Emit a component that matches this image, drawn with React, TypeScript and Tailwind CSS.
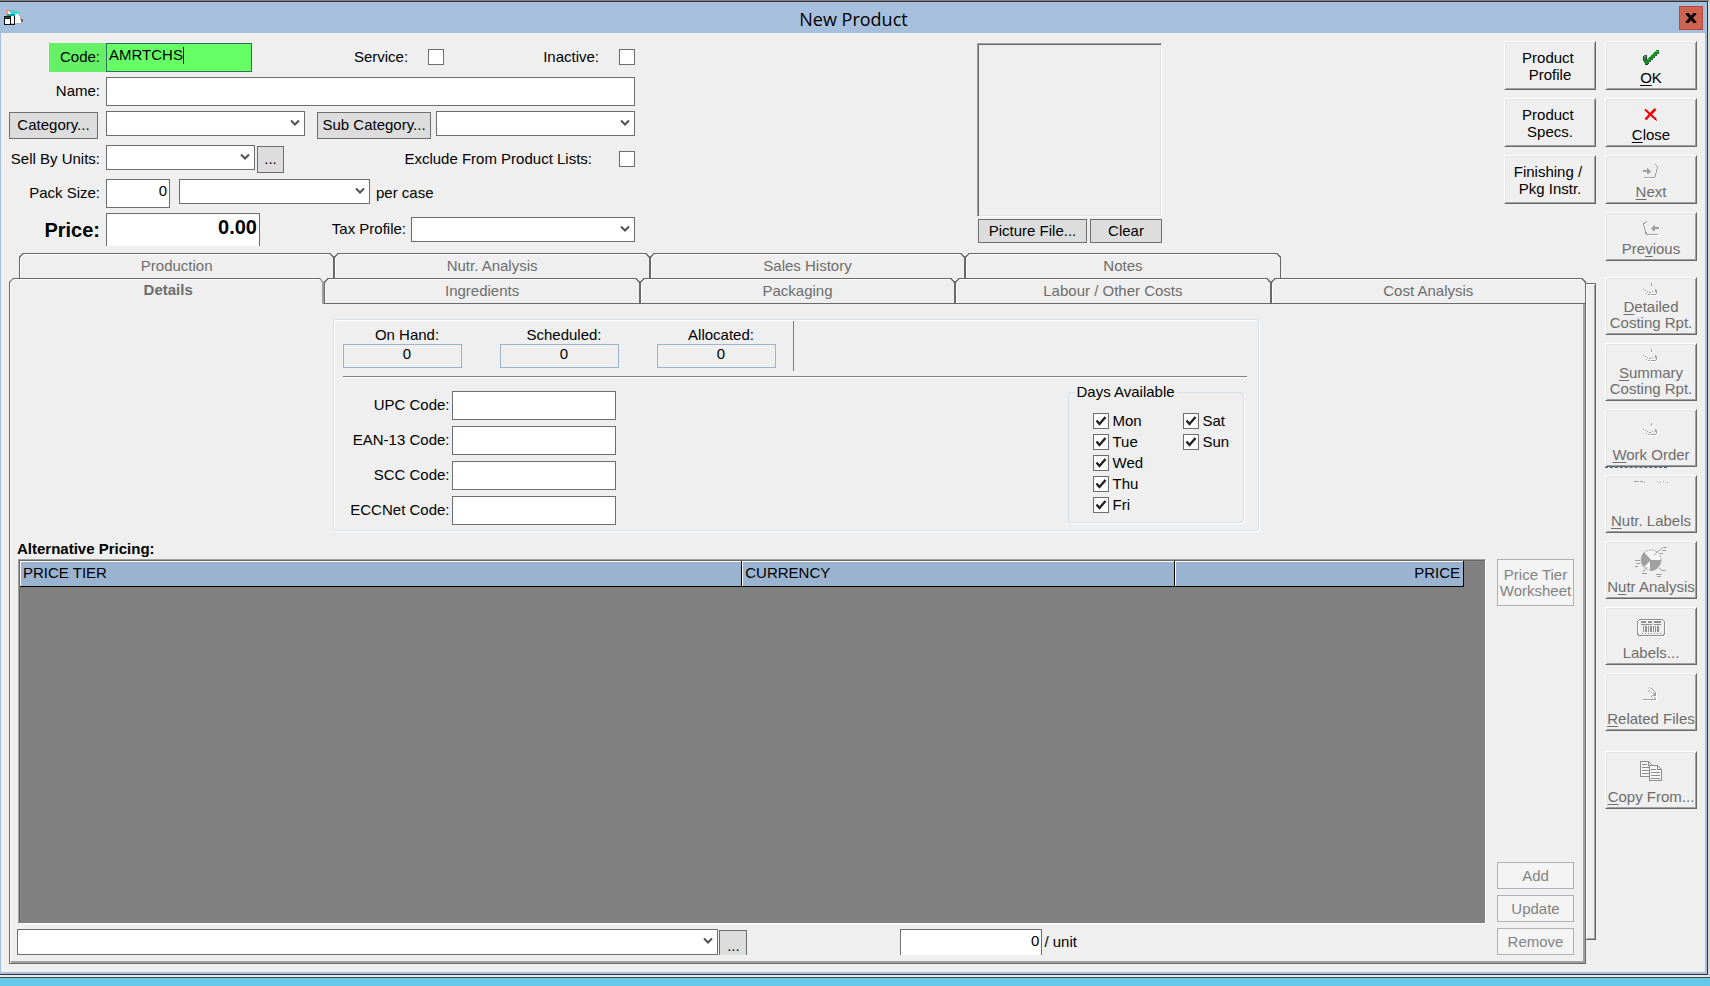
import { FC, ReactNode, useState } from 'react';
import clsx from 'clsx';

const bevel =
    'border border-t-white border-l-white border-r-[#696969] border-b-[#696969] shadow-[inset_1px_1px_0_#e3e3e3,inset_-1px_-1px_0_#a0a0a0]';
const field = 'border border-[#6d6d6d] bg-white px-1 pb-[6px] outline-none';

const AppIcon: FC = () => (
    <svg width="20" height="16" viewBox="0 0 20 16" shapeRendering="crispEdges">
        <path d="M4 1h10l3 9v3H9L4 5z" fill="#fff" />
        <path d="M2.500 5V.500h7" stroke="#e88a8a" fill="none" />
        <path d="M4 1h10l2 3H7z" fill="#2ee0dc" />
        <path d="M15.500 4l1.500 6v3.500h-5" stroke="#b0b0b0" fill="none" />
        <path d="M17 9h2v3h-2z" fill="#6b6b6b" />
        <path d="M3 4h8v9H3z" fill="#fff" />
        <path d="M3 4h8v2H3z" fill="#0fa09e" />
        <path d="M10 6h1v8h-1zM7 14h4v1H7z" fill="#111" />
        <path d="M0 6h7v9H0z" fill="#111" />
        <path d="M1 9h5v5H1z" fill="#fff" />
        <path d="M1 7h5v1H1z" fill="#0a6a6a" />
    </svg>
);

const OkIcon: FC = () => (
    <svg width="16" height="15" viewBox="0 0 16 15" shapeRendering="crispEdges">
        <path d="M0 6h1V5h3v4h1V8h1V7h1V6h1V5h1V4h1V3h1V2h1V1h1V0h3v3h-1v1h-1v1h-1v1h-1v1h-1v1h-1v1H9v1H8v1H7v1H6v1H5v1H2v-1H1v-3H0z" fill="#168a24" />
        <path d="M12 1h3M10 3h1M9 4h1M7 6h1M5 9h1M1 6h2" stroke="#2fd63a" />
        <path d="M3 5h1v5H3zM0 6h1v5H0z" fill="#6b1a78" />
        <path d="M15 3h1v1h-1zM13 5h1v1h-1zM11 7h1v1h-1zM9 9h1v1H9zM7 11h1v1H7zM5 13h1v1H5zM2 14h3v1H2z" fill="#4a2a55" />
    </svg>
);

const CloseIcon: FC = () => (
    <svg width="14" height="13" viewBox="0 0 14 13">
        <path d="M1 1.500L12 11.500" stroke="#f00000" strokeWidth="2" />
        <path d="M11.500 1L5 7.500l-3.500 4" stroke="#f00000" strokeWidth="2.500" fill="none" />
        <path d="M11 11l2 1.500" stroke="#700" strokeWidth="1" />
    </svg>
);

const NextIcon: FC = () => (
    <svg width="16" height="15" viewBox="0 0 16 15" shapeRendering="crispEdges">
        <path d="M1 14h13v1H1z" fill="#fff" />
        <path d="M0 6h4V4h1v1h1v1h1v1h1v1H7v1H6v1H4V8H0z" fill="#a0a0a0" />
        <path d="M12 0h1v1h1v1h1v3h-1v4h-1v4h-1v1H1v-1h11v-4h1V5h1V2h-1V1h-1z" fill="#a0a0a0" />
    </svg>
);

const PreviousIcon: FC = () => (
    <svg width="16" height="15" viewBox="0 0 16 15" shapeRendering="crispEdges">
        <path d="M4 0H3v1H1v1H0v3h1v4h1v4h1v1h12v-1H4v-2H3V9H2V5H1V3h1V2h1V1h1z" fill="#a0a0a0" />
        <path d="M16 6h-4V4h-1v1h-1v1H9v1H8v1h1v1h1v1h2V8h4z" fill="#a0a0a0" />
        <path d="M4 14h12v1H4z" fill="#fff" />
    </svg>
);

const ReportIcon: FC = () => (
    <svg width="16" height="13" viewBox="0 0 16 13" shapeRendering="crispEdges">
        <path d="M9 1h1v3H9zM5 12h9v1H5zM14 8h1v4h-1z" fill="#fff" />
        <path
            d="M8 0h1v3H8zM0 6h1v1H0zM2 7h1v1H2zM4 8h1v1H4zM6 9h2v1H6zM9 8h1v1H9zM12 6h1v1h1v2h-2zM13 9h1v2h-1zM3 10h1v1H3zM5 11h2v1H5zM8 11h5v1H8z"
            fill="#a0a0a0"
        />
    </svg>
);

const DashIcon: FC = () => (
    <svg width="36" height="30" viewBox="0 0 36 30" shapeRendering="crispEdges">
        <path d="M1 0h5v1H1zM7 0h3v1H7zM11 1h1v1h-1zM24 0h1v1h-1zM30 0h1v1h-1zM34 1h1v1h-1zM27 1h1v1h-1z" fill="#a0a0a0" />
    </svg>
);

const AnalysisIcon: FC = () => (
    <svg width="32" height="30" viewBox="0 0 32 30">
        <circle cx="16" cy="13" r="10" fill="#f7f7f7" stroke="#a0a0a0" strokeDasharray="2 1" />
        <path d="M16 13L9 5a11 11 0 0 0 0 15z" fill="#a0a0a0" />
        <path d="M15 13h11a11 11 0 0 1-11 11z" fill="#a0a0a0" />
        <path
            d="M19 8l8-7M28 .5h4M27 3.500h4M25 6.500h3M0 13.500h5M1 16.500h4M0 19.500h3M12 20l-4 5M7 26.500h5M24 21l4 3M27 23.500h4M21 27.500h6M22 29.500h4"
            stroke="#a0a0a0"
            fill="none"
        />
    </svg>
);

const BarcodeIcon: FC = () => (
    <svg width="29" height="18" viewBox="0 0 29 18" shapeRendering="crispEdges">
        <rect x="1.500" y="1.500" width="27" height="16" rx="3" fill="none" stroke="#fff" />
        <rect x="0.500" y="0.500" width="27" height="16" rx="3" fill="none" stroke="#909090" />
        <path d="M4 2h5v2H4zM11 2h4v2h-4zM17 2h7v2h-7zM4 5h11v1H4zM17 5h7v1h-7z" fill="#909090" />
        <path d="M6 7h1v6H6zM8 7h2v6H8zM11 7h1v6h-1zM13 7h2v6h-2zM16 7h1v6h-1zM18 7h1v6h-1zM20 7h2v6h-2z" fill="#909090" />
        <path d="M5 14.500h19" stroke="#909090" strokeDasharray="1 2" />
    </svg>
);

const FilesIcon: FC = () => (
    <svg width="16" height="14" viewBox="0 0 16 14" shapeRendering="crispEdges">
        <path d="M13 6h1v7h-1zM2 13h12v1H2z" fill="#fff" />
        <path
            d="M6 0h1v1H6zM8 1h1v1H8zM9 2h1v1H9zM10 3h1v1h-1zM6 3h1v1H6zM5 4h1v1H5zM11 4h1v1h-1zM8 5h1v1H8zM10 6h3v1h-3zM12 5h1v4h-1zM11 7h1v2h-1zM9 8h2v1H9zM8 9h1v1H8zM11 10h1v1h-1zM12 11h1v2h-1zM0 12h12v1H0z"
            fill="#a0a0a0"
        />
    </svg>
);

const CopyIcon: FC = () => (
    <svg width="23" height="21" viewBox="0 0 23 21" shapeRendering="crispEdges">
        <path d="M.5.500h8l4 4v11H.500z" fill="#f7f7f7" stroke="#8c8c8c" />
        <path d="M8.500 1v3.500h4M2 3.500h5M2 6.500h7M2 9.500h7M2 12.500h7" stroke="#8c8c8c" fill="none" />
        <path d="M9.500 4.500h8l4 4v11h-12z" fill="#f7f7f7" stroke="#8c8c8c" />
        <path d="M17.500 5v3.500h4M11 8.500h5M11 11.500h9M11 14.500h9M11 17.500h9" stroke="#8c8c8c" fill="none" />
    </svg>
);

interface ComboProps {
    label: string;
    className: string;
    id?: string;
}

const Combo: FC<ComboProps> = ({ label, className, id }) => (
    <div className={clsx('relative', className)}>
        <select id={id} aria-label={label} className="block h-full w-full appearance-none border border-[#6d6d6d] bg-white px-1 outline-none">
            <option value=""></option>
        </select>
        <svg className="pointer-events-none absolute top-2 right-[5px]" width="10" height="8" viewBox="0 0 10 8">
            <path d="M1 1.500l4 4 4-4" stroke="#505050" strokeWidth="2" fill="none" />
        </svg>
    </div>
);

const CheckBox: FC<{ id: string; initial?: boolean }> = ({ id, initial = false }) => {
    const [checked, setChecked] = useState(initial);
    return (
        <span className="relative block size-4 shrink-0">
            <input
                id={id}
                type="checkbox"
                checked={checked}
                onChange={() => setChecked(!checked)}
                className="block size-4 appearance-none border border-[#6d6d6d] bg-white"
            />
            {checked && (
                <svg className="pointer-events-none absolute inset-0" width="16" height="16" viewBox="0 0 16 16">
                    <path d="M3.500 7.500l3 3.500 6-7" stroke="#222" strokeWidth="2.400" fill="none" />
                </svg>
            )}
        </span>
    );
};

const GreyButton: FC<{ className: string; children: ReactNode }> = ({ className, children }) => (
    <button type="button" className={clsx('shrink-0 border border-[#6d6d6d] bg-[#dddddd]', className)}>
        {children}
    </button>
);

const FlatButton: FC<{ className: string; children: ReactNode }> = ({ className, children }) => (
    <button type="button" disabled className={clsx('w-full border border-[#adb2b5] bg-[#f4f4f4] leading-4 text-[#838383]', className)}>
        {children}
    </button>
);

const FormRow: FC<{ id: string; label: string; children: ReactNode }> = ({ id, label, children }) => (
    <div className="flex h-[34px] items-start">
        <label htmlFor={id} className="w-[97px] shrink-0 pr-[6px] text-right leading-[27px] whitespace-nowrap">
            {label}
        </label>
        {children}
    </div>
);

interface SideButtonProps {
    icon: ReactNode;
    // text is split around the underlined access key
    pre?: string;
    hot?: string;
    post?: string;
    second?: string;
    tall?: boolean;
    enabled?: boolean;
}

const SideButton: FC<SideButtonProps> = ({ icon, pre, hot, post, second, tall, enabled }) => (
    <button
        type="button"
        disabled={!enabled}
        className={clsx(
            bevel,
            'flex w-[92px] shrink-0 flex-col items-center pt-[2px] pb-[3px] leading-4 whitespace-nowrap',
            tall ? 'h-[58px]' : 'h-[49px]',
            enabled ? 'text-black' : 'text-[#6d6d6d]'
        )}
    >
        <span className="flex min-h-0 flex-1 items-center">{icon}</span>
        <span>
            {pre}
            {hot && <span className="underline underline-offset-2">{hot}</span>}
            {post}
        </span>
        {second && <span>{second}</span>}
    </button>
);

const backTabs = ['Production', 'Nutr. Analysis', 'Sales History', 'Notes'];
const frontTabs = ['Details', 'Ingredients', 'Packaging', 'Labour / Other Costs', 'Cost Analysis'];
const stock = ['On Hand:', 'Scheduled:', 'Allocated:'];
const codes = ['UPC Code:', 'EAN-13 Code:', 'SCC Code:', 'ECCNet Code:'];
const weekDays = ['Mon', 'Tue', 'Wed', 'Thu', 'Fri'];
const weekend = ['Sat', 'Sun'];
const profileButtons = ['Product \nProfile', 'Product \nSpecs.', 'Finishing / \nPkg Instr.'];

const tabShape =
    'rounded-t-[4px] [corner-shape:bevel] border-t border-l border-[#696969] shadow-[inset_1px_1px_0_#fff]';

const DayList: FC<{ days: string[] }> = ({ days }) => (
    <div className="flex flex-col gap-[5px]">
        {days.map((day) => (
            <div key={day} className="flex h-4 items-center gap-1">
                <CheckBox id={day} initial />
                <label htmlFor={day}>{day}</label>
            </div>
        ))}
    </div>
);

const ProductForm: FC = () => (
    <div className="w-[626px] shrink-0">
        <div className="flex h-[34px] items-start">
            <label htmlFor="code" className="ml-10 h-[29px] w-[57px] shrink-0 bg-[#66f066] pr-[6px] text-right leading-[27px]">
                Code:
            </label>
            <div className="relative h-[29px] w-[146px]">
                <input
                    id="code"
                    defaultValue="AMRTCHS"
                    className="block h-full w-full border border-[#2f6f5f] bg-[#66ff66] px-[2px] pb-[6px] caret-transparent outline-none"
                />
                {/* text caret */}
                <span className="pointer-events-none absolute top-1 left-[77px] h-[17px] w-px bg-black" />
            </div>
            <div className="ml-auto flex h-7 items-center gap-5">
                <label htmlFor="service">Service:</label>
                <CheckBox id="service" />
            </div>
            <div className="ml-[99px] flex h-7 items-center gap-5">
                <label htmlFor="inactive">Inactive:</label>
                <CheckBox id="inactive" />
            </div>
        </div>
        <FormRow id="name" label="Name:">
            <input id="name" className={clsx(field, 'h-[29px] w-full')} />
        </FormRow>
        <div className="flex h-[34px] items-start">
            <GreyButton className="mt-px mr-2 h-[27px] w-[89px]">Category...</GreyButton>
            <Combo label="Category" className="h-[25px] w-[199px]" />
            <GreyButton className="mt-px mr-[5px] ml-auto h-[27px] w-[114px]">Sub Category...</GreyButton>
            <Combo label="Sub category" className="h-[25px] w-[199px]" />
        </div>
        <FormRow id="units" label="Sell By Units:">
            <Combo id="units" label="Sell by units" className="h-[25px] w-[149px]" />
            <GreyButton className="mt-px ml-[2px] h-[27px] w-[27px]">...</GreyButton>
            <div className="ml-auto flex h-7 items-center gap-[27px]">
                <label htmlFor="exclude">Exclude From Product Lists:</label>
                <CheckBox id="exclude" />
            </div>
        </FormRow>
        <FormRow id="pack" label="Pack Size:">
            <input id="pack" defaultValue="0" className={clsx(field, 'h-[29px] w-16 px-[2px] text-right')} />
            <Combo label="Pack unit" className="ml-[9px] h-[25px] w-[191px]" />
            <span className="ml-[6px] leading-[27px]">per case</span>
        </FormRow>
        <div className="flex h-[33px] items-center">
            <label htmlFor="price" className="w-[97px] shrink-0 pr-[6px] text-right text-xl font-bold">
                Price:
            </label>
            <input
                id="price"
                defaultValue="0.00"
                className="h-full w-[154px] border border-b-0 border-[#6d6d6d] bg-white px-[2px] pb-[6px] text-right text-xl font-bold outline-none"
            />
            <label htmlFor="tax" className="mr-[5px] ml-auto">
                Tax Profile:
            </label>
            <Combo id="tax" label="Tax profile" className="h-[25px] w-[224px]" />
        </div>
    </div>
);

const StockGroup: FC = () => (
    <section className="mx-auto h-[212px] w-[926px] max-w-full shrink-0 rounded-[3px] border border-[#d5dfe5] pr-[11px] pl-[9px] shadow-[inset_1px_1px_0_#fff,1px_1px_0_#fff]">
        <div className="flex h-[57px] border-b border-[#808080] shadow-[0_1px_0_#fff]">
            <div className="flex gap-[38px] pt-[6px]">
                {stock.map((label) => (
                    <div key={label} className="w-[119px] text-center leading-[18px]">
                        <div className="pl-[10px]">{label}</div>
                        <div className="h-6 border border-[#9ab3d1] pl-[10px]">
                            0
                        </div>
                    </div>
                ))}
            </div>
            <div className="mt-px ml-[17px] h-[50px] w-px bg-[#808080]" />
        </div>
        <div className="flex justify-between">
            <div className="flex flex-col gap-[6px] pt-[14px]">
                {codes.map((code) => (
                    <div key={code} className="flex items-center">
                        <label htmlFor={code} className="w-[109px] pr-[2px] text-right">
                            {code}
                        </label>
                        <input id={code} className={clsx(field, 'h-[29px] w-[164px]')} />
                    </div>
                ))}
            </div>
            <fieldset className="mt-[6px] mr-[3px] h-[140px] w-[176px] rounded-[3px] border border-[#d5dfe5] shadow-[1px_1px_0_#fff]">
                <legend className="ml-[6px] px-[2px] leading-[18px]">Days Available</legend>
                <div className="grid grid-cols-[90px_auto] items-start pt-3 pl-6">
                    <DayList days={weekDays} />
                    <DayList days={weekend} />
                </div>
            </fieldset>
        </div>
    </section>
);

const Pricing: FC = () => (
    <section className="flex min-h-0 flex-1 flex-col pt-[9px]">
        <h2 className="pb-px font-bold leading-[18px]">Alternative Pricing:</h2>
        <div className="flex flex-1 gap-[11px]">
            <div className="flex flex-1 flex-col gap-[5px]">
                <div className="ml-px flex-1 border border-t-[#a0a0a0] border-r-white border-b-white border-l-[#a0a0a0] bg-[#808080] pr-[22px] shadow-[inset_1px_1px_0_#696969]">
                    <table className="mt-px ml-px w-full table-fixed border-collapse text-left">
                        <thead>
                            <tr className="h-[25px] border-b border-black bg-[#9ab3d1]">
                                <th className="w-1/2 border-r border-black px-[3px] font-normal shadow-[inset_1px_1px_0_#fff]">PRICE TIER</th>
                                <th className="w-[30%] border-r border-black px-[3px] font-normal shadow-[inset_1px_1px_0_#fff]">CURRENCY</th>
                                <th className="w-1/5 border-r border-black px-[3px] text-right font-normal shadow-[inset_1px_1px_0_#fff]">PRICE</th>
                            </tr>
                        </thead>
                    </table>
                </div>
                <div className="flex h-[26px]">
                    <div className="mr-[2px] flex w-[60%]">
                        <Combo label="Price tier" className="mr-px h-full flex-1" />
                        <GreyButton className="mt-px mr-[151px] w-7 border-b-0 pt-1">...</GreyButton>
                    </div>
                    <input
                        id="unit-price"
                        defaultValue="0"
                        className="h-full w-[142px] border border-b-0 border-[#6d6d6d] bg-white px-[2px] pb-1 text-right outline-none"
                    />
                    <label htmlFor="unit-price" className="ml-[2px] leading-[26px]">
                        / unit
                    </label>
                </div>
            </div>
            <div className="flex w-[77px] flex-col gap-[6px]">
                <FlatButton className="mb-auto h-[47px]">Price Tier Worksheet</FlatButton>
                <FlatButton className="h-[27px]">Add</FlatButton>
                <FlatButton className="h-[27px]">Update</FlatButton>
                <FlatButton className="h-[27px]">Remove</FlatButton>
            </div>
        </div>
    </section>
);

export default function App() {
    return (
        <div className="flex min-h-screen flex-col bg-[#65c9e9] font-['Liberation_Sans',Arial,sans-serif] text-[15px] text-black">
            <div className="flex flex-1 flex-col border-t border-r-2 border-t-[#808080] border-r-[#d8d8d8] bg-[#e8e8e8] pb-[2px]">
                <div className="flex flex-1 flex-col border-t border-r border-b border-[#33333d] bg-[#a6bfdc]">
                    <header className="grid h-[31px] grid-cols-[1fr_auto_1fr] items-center pr-1 pl-1">
                        <AppIcon />
                        <h1 className="pt-[2px] font-['Open_Sans',sans-serif] text-lg leading-6">New Product</h1>
                        <button
                            type="button"
                            aria-label="Close window"
                            className="flex size-6 items-center justify-center justify-self-end border border-[#b5483a] bg-[#cd6350]"
                        >
                            <svg width="12" height="10" viewBox="0 0 12 10">
                                <path d="M1.500 0l9 10M10.500 0l-9 10" stroke="#000" strokeWidth="3" />
                            </svg>
                        </button>
                    </header>

                    <main className="mr-[2px] mb-[2px] ml-px flex flex-1 gap-[9px] bg-[#efefef] pt-2 pr-2 pl-2">
                        <div className="flex min-w-0 flex-1 flex-col pb-2">
                            <div className="flex justify-between">
                                <div className="pt-[2px]">
                                    <ProductForm />
                                </div>
                                <div className="w-[185px] pt-[2px]">
                                    <div className="h-[174px] border border-t-[#a0a0a0] border-r-white border-b-white border-l-[#a0a0a0] shadow-[inset_1px_1px_0_#696969,inset_-1px_-1px_0_#e3e3e3]" />
                                    <div className="flex justify-between pt-[2px] pl-px">
                                        <GreyButton className="h-6 w-[109px]">Picture File...</GreyButton>
                                        <GreyButton className="h-6 w-[72px]">Clear</GreyButton>
                                    </div>
                                </div>
                                <div className="flex flex-col gap-2">
                                    {profileButtons.map((text) => (
                                        <button key={text} type="button" className={clsx(bevel, 'h-[49px] w-[92px] leading-[17px] whitespace-pre')}>
                                            {text}
                                        </button>
                                    ))}
                                </div>
                            </div>

                            {/* Back row of tabs */}
                            <div className="mt-[7px] ml-[10px] grid grid-cols-5" role="tablist">
                                {backTabs.map((tab) => (
                                    <button
                                        key={tab}
                                        type="button"
                                        role="tab"
                                        className={clsx(tabShape, 'h-[25px] border-r pt-px text-[#6d6d6d]')}
                                    >
                                        {tab}
                                    </button>
                                ))}
                            </div>

                            <div className="flex flex-1">
                                <div className="flex min-w-0 flex-1 flex-col">
                                    <div className="grid grid-cols-5" role="tablist">
                                        {frontTabs.map((tab, i) => (
                                            <button
                                                key={tab}
                                                type="button"
                                                role="tab"
                                                aria-selected={i === 0}
                                                className={clsx(
                                                    tabShape,
                                                    'h-[26px] text-[#6d6d6d]',
                                                    i === 0 ? 'border-r-2 border-r-[#a0a0a0] pb-[2px] pl-1 font-bold' : 'border-r border-b pt-px'
                                                )}
                                            >
                                                {tab}
                                            </button>
                                        ))}
                                    </div>
                                    <div className="flex flex-1 flex-col border-r border-b border-l border-[#696969] pt-[15px] pr-[11px] pb-2 pl-[7px] shadow-[inset_1px_0_0_#fff,inset_-2px_-2px_0_#a0a0a0]">
                                        <StockGroup />
                                        <Pricing />
                                    </div>
                                </div>
                                {/* Edge of the page behind */}
                                <div className="mt-[5px] mb-6 w-[10px] border-t border-r border-b border-[#696969] shadow-[inset_1px_1px_0_#fff,inset_-1px_-1px_0_#a0a0a0]" />
                            </div>
                        </div>

                        <aside className="flex flex-col gap-2">
                            <SideButton enabled icon={<OkIcon />} hot="O" post="K" />
                            <SideButton enabled icon={<CloseIcon />} hot="C" post="lose" />
                            <SideButton icon={<NextIcon />} hot="N" post="ext" />
                            <SideButton icon={<PreviousIcon />} pre="Pre" hot="v" post="ious" />
                            <div className="flex flex-col gap-2 pt-2">
                                <SideButton tall icon={<ReportIcon />} hot="D" post="etailed" second="Costing Rpt." />
                                <SideButton tall icon={<ReportIcon />} hot="S" post="ummary" second="Costing Rpt." />
                                <div className="relative">
                                    <SideButton tall icon={<ReportIcon />} hot="W" post="ork Order" />
                                    <span className="absolute top-full left-0 w-[62px] border-t border-dashed border-[#2f6f96]" />
                                </div>
                                <SideButton tall icon={<DashIcon />} hot="N" post="utr. Labels" />
                                <SideButton tall icon={<AnalysisIcon />} pre="N" hot="u" post="tr Analysis" />
                                <SideButton tall icon={<BarcodeIcon />} pre="Labels..." />
                                <SideButton tall icon={<FilesIcon />} hot="R" post="elated Files" />
                            </div>
                            <div className="pt-3">
                                <SideButton tall icon={<CopyIcon />} hot="C" post="opy From..." />
                            </div>
                        </aside>
                    </main>
                </div>
            </div>
            <footer className="h-[9px] border-t border-[#4a4a4a]" />
        </div>
    );
}
